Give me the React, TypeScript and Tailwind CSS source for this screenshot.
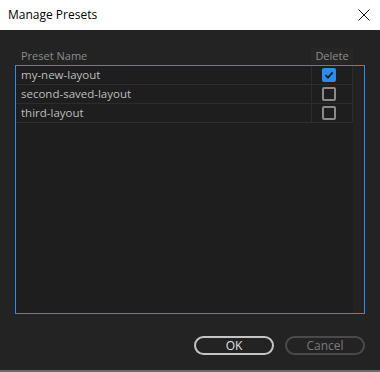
const rows = [
  { name: 'my-new-layout', checked: true },
  { name: 'second-saved-layout', checked: false },
  { name: 'third-layout', checked: false },
];

function CheckBox({ checked }: { checked: boolean }) {
  if (checked) {
    return (
      <div className="flex h-[14px] w-[14px] items-center justify-center rounded-[2px] bg-[#2d8ceb]">
        <svg width="10" height="10" viewBox="0 0 10 10" fill="none">
          <path d="M1.5 5.2 L4 7.6 L8.6 2.4" stroke="#1b1b1b" strokeWidth="1.8" />
        </svg>
      </div>
    );
  }
  return <div className="h-[14px] w-[14px] rounded-[2px] border-2 border-[#8a8a8a]" />;
}

export default function App() {
  return (
    <div className="flex h-[372px] w-[380px] flex-col bg-[#232323] font-['Open_Sans',sans-serif]">
      <header className="flex h-[30px] items-center justify-between bg-white pl-2 pr-[10px]">
        <h1 className="text-[12px] text-black">Manage Presets</h1>
        <svg width="12" height="12" viewBox="0 0 12 12">
          <path d="M0.5 0.5 L11.5 11.5 M11.5 0.5 L0.5 11.5" stroke="#111" strokeWidth="1" />
        </svg>
      </header>

      <main className="flex flex-1 flex-col px-[15px] pt-[17px]">
        <div className="flex h-[18px] items-center pr-[12px] text-[11px] text-[#8c8c8c]">
          <div className="flex-1 pl-[6px]">Preset Name</div>
          <div className="w-[42px] bg-[#262626] text-center">Delete</div>
        </div>

        <div className="flex h-[249px] border border-[#2d8ceb] bg-[#1e1e1e]">
          <div className="flex flex-1 flex-col">
            {rows.map((r) => (
              <div key={r.name} className="flex h-[19px] border-b border-[#2c2c2c]">
                <div className="flex flex-1 items-center pl-[5px] text-[11.5px] text-[#bdbdbd]">{r.name}</div>
                <div className="flex w-[42px] items-center border-x border-[#2c2c2c] pl-[10px]">
                  <CheckBox checked={r.checked} />
                </div>
              </div>
            ))}
          </div>
          <div className="w-[11px] bg-[#222222]" />
        </div>

        <div className="mt-[22px] flex justify-end gap-[11px]">
          <button className="h-[19px] w-[80px] rounded-full border-2 border-[#c4c4c4] text-[12px] leading-none text-[#e0e0e0]">
            OK
          </button>
          <button className="h-[19px] w-[80px] rounded-full border-2 border-[#4a4a4a] text-[12px] leading-none text-[#7a7a7a]">
            Cancel
          </button>
        </div>
      </main>
      <div className="h-[2px] bg-[#6b6b6b]" />
    </div>
  );
}
